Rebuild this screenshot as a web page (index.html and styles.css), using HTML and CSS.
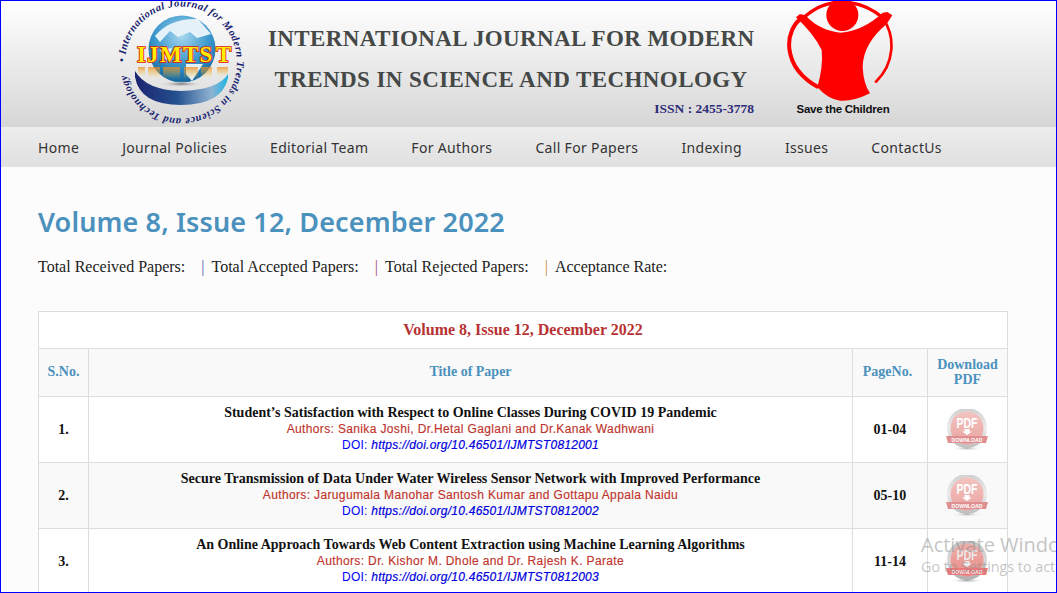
FILE: index.html
```html
<!DOCTYPE html>
<html lang="en">
<head>
<meta charset="utf-8">
<title>IJMTST Volume 8, Issue 12</title>
<link rel="stylesheet" href="styles.css">
</head>
<body>
<div class="frame">
<header class="banner">
  <svg class="logo" viewBox="116 0 131 126" width="131" height="126" aria-label="IJMTST logo">
    <defs>
      <radialGradient id="globe" cx="50%" cy="30%" r="75%"><stop offset="0" stop-color="#a9d8ee"/><stop offset=".55" stop-color="#3a97cc"/><stop offset="1" stop-color="#0f5f96"/></radialGradient>
      <linearGradient id="disc" x1="0" x2="1" y1="0" y2="0"><stop offset="0" stop-color="#1b2370"/><stop offset=".45" stop-color="#24508f"/><stop offset=".82" stop-color="#8fb2d2"/><stop offset="1" stop-color="#1fb6e4"/></linearGradient>
      <radialGradient id="discShade"><stop offset="0" stop-color="#777"/><stop offset="1" stop-color="#e6e6e6" stop-opacity="0"/></radialGradient>
      <linearGradient id="reflect" x1="0" x2="0" y1="0" y2="1"><stop offset="0" stop-color="#f08a20" stop-opacity=".75"/><stop offset="1" stop-color="#f0c020" stop-opacity="0"/></linearGradient>
      <path id="ring" d="M125 62 A56 56 0 1 1 125 63"/>
    </defs>
    <circle cx="182" cy="49" r="33.500" fill="url(#globe)"/>
    <path d="M155 36 Q170 18 198 19 L211 34 L197 38 L190 32 L178 37 L170 31 L160 42Z M186 64 L203 64 L192 81 L186 74Z M160 50 L172 48 L167 61Z" fill="#e4f1f8"/>
    <path d="M135 71 Q146 90 181 91 Q218 90 228 74 L228 78 Q222 105 181 105 Q140 105 135 77Z" fill="url(#disc)"/>
    <ellipse cx="181" cy="84" rx="22" ry="3" fill="url(#discShade)"/>
    <rect x="138" y="67" width="7" height="9" fill="url(#reflect)"/>
    <rect x="148" y="67" width="12" height="11" fill="url(#reflect)"/>
    <rect x="163" y="67" width="17" height="12" fill="url(#reflect)"/>
    <rect x="184" y="67" width="14" height="12" fill="url(#reflect)"/>
    <rect x="201" y="67" width="11" height="11" fill="url(#reflect)"/>
    <rect x="217" y="67" width="11" height="9" fill="url(#reflect)"/>
    <text class="logo-name" x="137 147 160 183 199.500 216" y="62">IJMTST</text>
    <text class="logo-ring"><textPath href="#ring" textLength="338">• International Journal for Modern Trends in Science and Technology</textPath></text>
  </svg>
  <div class="masthead">
    <div class="masthead-line">INTERNATIONAL JOURNAL FOR MODERN</div>
    <div class="masthead-line second">TRENDS IN SCIENCE AND TECHNOLOGY</div>
    <div class="issn">ISSN : 2455-3778</div>
  </div>
  <div class="stc">
    <svg viewBox="561 0 318 306" width="106" height="102" aria-label="Save the Children emblem">
      <path d="M612 48 C548 90 545 200 655 262" fill="none" stroke="#f00" stroke-width="12"/>
      <path d="M612 52 Q660 8 722 6 Q795 6 850 55" fill="none" stroke="#f00" stroke-width="10"/>
      <path d="M852 60 C885 110 885 190 828 245" fill="none" stroke="#f00" stroke-width="8" stroke-linecap="round"/>
      <circle cx="727" cy="45" r="48" fill="#f00"/>
      <path d="M588 52 L600 42 L618 48 Q660 92 722 98 Q790 92 848 38 L862 36 L877 46 L860 72 Q790 130 788 200 Q790 250 810 280 Q760 305 720 302 Q685 298 652 262 Q670 200 665 150 Q640 100 588 52Z" fill="#f00"/>
    </svg>
    <div class="stc-name">Save the Children</div>
  </div>
</header>
<nav class="menu">
  <a>Home</a><a>Journal Policies</a><a>Editorial Team</a><a>For Authors</a><a>Call For Papers</a><a>Indexing</a><a>Issues</a><a>ContactUs</a>
</nav>
<main class="content">
  <h1 class="title">Volume 8, Issue 12, December 2022</h1>
  <p class="stats">
    <span>Total Received Papers:</span><i class="sep sep-a">|</i><span>Total Accepted Papers:</span><i class="sep sep-b">|</i><span>Total Rejected Papers:</span><i class="sep sep-c">|</i><span>Acceptance Rate:</span>
  </p>
  <table class="papers">
    <colgroup><col class="c-no"><col class="c-title"><col class="c-page"><col class="c-pdf"></colgroup>
    <thead>
      <tr class="caption-row"><th colspan="4">Volume 8, Issue 12, December 2022</th></tr>
      <tr class="head-row"><th>S.No.</th><th>Title of Paper</th><th class="page-head">PageNo.</th><th class="pdf-head">Download PDF</th></tr>
    </thead>
    <tbody>
      <tr>
        <td class="num">1.</td>
        <td class="paper"><b>Student’s Satisfaction with Respect to Online Classes During COVID 19 Pandemic</b><span class="authors">Authors: Sanika Joshi, Dr.Hetal Gaglani and Dr.Kanak Wadhwani</span><span class="doi">DOI: <em>https://doi.org/10.46501/IJMTST0812001</em></span></td>
        <td class="num">01-04</td>
        <td class="pdf"><svg class="pdf-icon" viewBox="0 0 44 42" width="44" height="42"><use href="#pdfIcon"/></svg></td>
      </tr>
      <tr class="alt">
        <td class="num">2.</td>
        <td class="paper"><b>Secure Transmission of Data Under Water Wireless Sensor Network with Improved Performance</b><span class="authors">Authors: Jarugumala Manohar Santosh Kumar and Gottapu Appala Naidu</span><span class="doi">DOI: <em>https://doi.org/10.46501/IJMTST0812002</em></span></td>
        <td class="num">05-10</td>
        <td class="pdf"><svg class="pdf-icon" viewBox="0 0 44 42" width="44" height="42"><use href="#pdfIcon"/></svg></td>
      </tr>
      <tr>
        <td class="num">3.</td>
        <td class="paper"><b>An Online Approach Towards Web Content Extraction using Machine Learning Algorithms</b><span class="authors">Authors: Dr. Kishor M. Dhole and Dr. Rajesh K. Parate</span><span class="doi">DOI: <em>https://doi.org/10.46501/IJMTST0812003</em></span></td>
        <td class="num">11-14</td>
        <td class="pdf"><svg class="pdf-icon pdf-hot" viewBox="0 0 44 42" width="44" height="42"><use href="#pdfIcon"/></svg></td>
      </tr>
    </tbody>
  </table>
</main>
<svg class="defs" width="0" height="0" aria-hidden="true">
  <defs>
    <linearGradient id="pdfFill" x1="0" x2="0" y1="0" y2="1"><stop offset="0" stop-color="#f3c4c1"/><stop offset="1" stop-color="#eaa3a0"/></linearGradient>
    <radialGradient id="pdfShadow"><stop offset="0" stop-color="#b5b5b5"/><stop offset="1" stop-color="#fff" stop-opacity="0"/></radialGradient>
    <linearGradient id="pdfRim" x1="0" x2="0" y1="0" y2="1"><stop offset="0" stop-color="#d0d0d0"/><stop offset=".5" stop-color="#ececec"/><stop offset="1" stop-color="#bdbdbd"/></linearGradient>
    <g id="pdfIcon">
      <ellipse cx="22" cy="39.500" rx="16" ry="2.500" fill="url(#pdfShadow)"/>
      <circle cx="22" cy="19" r="20" fill="url(#pdfRim)"/>
      <circle cx="22" cy="19" r="16.500" fill="url(#pdfFill)"/>
      <path d="M1 27 H43 L41 34 H3Z" fill="#e08f90"/>
      <text class="pdf-word" x="22" y="19" text-anchor="middle" textLength="21" lengthAdjust="spacingAndGlyphs">PDF</text>
      <path d="M19.500 20 H24.500 V22.500 H27 L22 26 L17 22.500 H19.500Z" fill="#fff"/>
      <text class="pdf-down" x="22" y="32.500" text-anchor="middle" textLength="31" lengthAdjust="spacingAndGlyphs">DOWNLOAD</text>
    </g>
  </defs>
</svg>
<div class="watermark">
  <div class="wm-big">Activate Windows</div>
  <div class="wm-small">Go to Settings to activate Windows.</div>
</div>
</div>
</body>
</html>
```
FILE: styles.css
```css
html, body { margin: 0; padding: 0; height: 100%; overflow: hidden; }
body { background: #fcfcfc; font-family: "Liberation Serif", serif; color: #222; }
.frame { position: relative; box-sizing: border-box; width: 1057px; height: 593px; border: 1px solid #00f; overflow: hidden; background: #fcfcfc; }
.banner { height: 126px; box-sizing: border-box; display: flex; align-items: flex-start; padding-left: 115px; background: linear-gradient(#fff, #d6d6d6); overflow: hidden; }
.logo { flex: none; margin-top: -1px; }
.logo-name { font: bold 23px "Liberation Serif", serif; fill: #ffee00; stroke: #e01010; stroke-width: 1.600px; paint-order: stroke; }
.logo-ring { font: italic bold 10.500px "Liberation Serif", serif; fill: #14206e; }
.masthead { flex: none; width: 486px; margin-left: 21px; font-weight: bold; color: #444846; text-align: center; }
.masthead-line { font-size: 23px; letter-spacing: .38px; line-height: 29px; margin-top: 23px; white-space: nowrap; }
.masthead-line.second { margin-top: 12px; letter-spacing: .42px; }
.issn { font-size: 13.500px; color: #2c2c78; text-align: right; margin-top: 7px; line-height: 16px; }
.stc { flex: none; margin-left: 33px; width: 106px; }
.stc svg { display: block; margin-top: -1px; }
.stc-name { font: bold 11.500px "Liberation Sans", sans-serif; color: #111; text-align: center; line-height: 14px; margin: 0 0 0 6px; letter-spacing: -.25px; white-space: nowrap; }
.menu { height: 40px; display: flex; align-items: center; gap: 43px; padding: 0 0 0 37px; box-sizing: border-box; background: linear-gradient(#ededed, #e0e0e0); font: 14px/39px "Noto Sans", sans-serif; letter-spacing: .33px; color: #333; }
.content { padding: 0 48px 0 37px; }
.title { margin: 36px 0 0; font: 600 27px/38px "Noto Sans", sans-serif; letter-spacing: .12px; color: #4b91bd; white-space: nowrap; }
.stats { margin: 16px 0 0; font-size: 16px; line-height: 20px; color: #222; white-space: nowrap; }
.sep { font-style: normal; margin: 0 7px 0 16px; }
.sep-a { color: #5a5ab0; }
.sep-b { color: #96507e; }
.sep-c { color: #c88a30; }
.papers { width: 970px; margin-top: 34px; border-collapse: collapse; table-layout: fixed; background: #fff; font-size: 14px; }
.c-no { width: 50px; }
.c-page { width: 75px; }
.c-pdf { width: 80px; }
.papers th, .papers td { border: 1px solid #ddd; padding: 0; text-align: center; }
.caption-row th { height: 36px; font-size: 16px; color: #b73333; background: #fff; }
.head-row th { height: 45px; padding-bottom: 2px; background: #f9f9f9; color: #4b91bd; line-height: 15px; }
.head-row .page-head { padding-right: 5px; }
.head-row .pdf-head { padding: 0 8px 2px; }
.papers td { height: 65px; }
.papers .alt td { background: #f9f9f9; }
.num { font-weight: bold; color: #111; }
.papers .paper { height: 63px; padding-bottom: 2px; line-height: 16px; color: #111; }
.paper b, .authors, .doi { display: block; white-space: nowrap; }
.authors, .doi { font: 12px/16px "Liberation Sans", sans-serif; }
.authors { color: #c0342c; font-weight: normal; letter-spacing: .36px; -webkit-text-stroke: .15px #c0342c; }
.doi { color: #00f; letter-spacing: .25px; }
.doi em { font-style: italic; color: #00d; -webkit-text-stroke: .2px #00d; }
.pdf-icon { display: block; margin: 0 auto; }
.pdf-hot { filter: saturate(1.7) brightness(.92); }
.pdf-word { font: bold 14px "Liberation Sans", sans-serif; fill: #fff; }
.pdf-down { font: bold 5px "Liberation Sans", sans-serif; fill: #fff; }
.defs { position: absolute; }
.watermark { position: absolute; left: 920px; top: 530px; white-space: nowrap; font-family: "Open Sans", sans-serif; color: rgba(140,140,140,.5); }
.wm-big { font-size: 20px; line-height: 27px; }
.wm-small { font-size: 14.300px; line-height: 19px; margin-top: -1px; }
```
